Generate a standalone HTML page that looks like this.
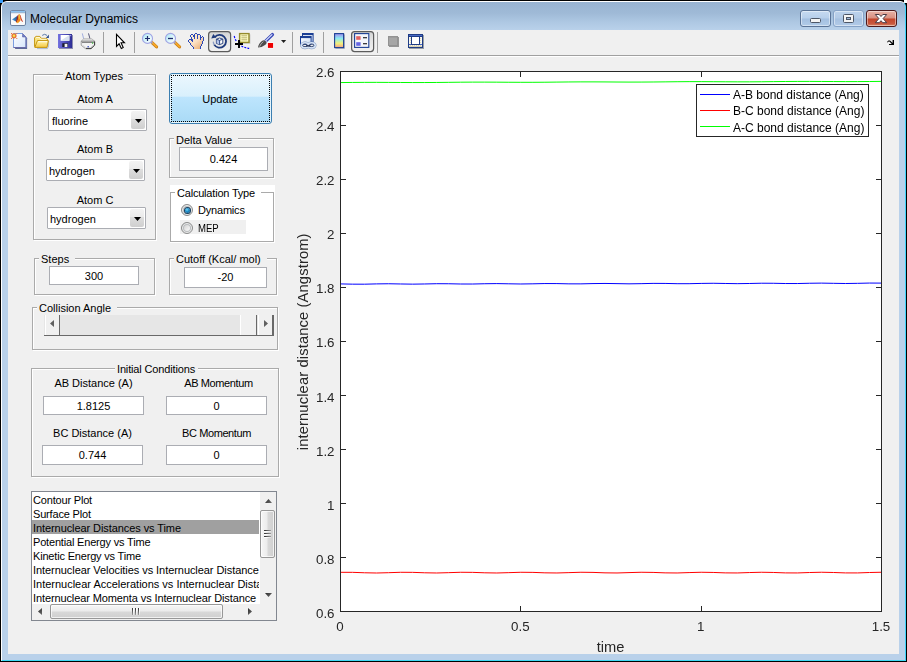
<!DOCTYPE html>
<html><head><meta charset="utf-8"><title>Molecular Dynamics</title>
<style>
*{box-sizing:border-box;margin:0;padding:0}
html,body{width:907px;height:662px;overflow:hidden;background:#000}
body{font-family:"Liberation Sans",sans-serif;font-size:11px;color:#000;position:relative}
.abs{position:absolute}
#frame{position:absolute;left:0;top:0;width:907px;height:662px;background:#000;}
#frame2{position:absolute;left:1px;top:1px;width:905px;height:660px;background:#b9d1ea;border-radius:6px 6px 0 0;border:1px solid;border-color:#fff #3ed4fb #3fd8f4 #fff}
#tgrad{position:absolute;left:2px;top:2px;width:903px;height:28px;border-radius:5px 5px 0 0;background:linear-gradient(#98b3d1 0,#9fbad7 40%,#aec8e3 72%,#b9d1ea 100%);}
#client{position:absolute;left:8px;top:30px;width:891px;height:624px;background:#f0f0f0;}
#title{position:absolute;left:30px;top:12px;font-size:12px;line-height:15px;color:#000;white-space:nowrap}
.lbl{position:absolute;white-space:nowrap;font-size:11px;line-height:13px;}
.c{text-align:center}
.panel{position:absolute;border:1px solid #aaa;box-shadow:1px 1px 0 #fff, inset 1px 1px 0 #fff;}
.ptitle{position:absolute;top:-5px;background:#f0f0f0;padding:0 2px;font-size:11px;line-height:13px;white-space:nowrap}
.edit{position:absolute;background:#fff;border:1px solid #abadb3;text-align:center;font-size:11px;}

.pop{position:absolute;height:22px;background:#fff;border:1px solid #abadb3;border-radius:1px;font-size:11px;line-height:22px;padding-left:3px;white-space:nowrap;box-shadow:inset 0 0 0 1px #fff}
.pop i{position:absolute;right:1px;top:1px;width:14px;height:18px;background:linear-gradient(#f3f3f3 0,#ebebeb 43%,#dddddd 46%,#cfcfcf 100%);border-radius:2px}
.pop i:after{content:"";position:absolute;left:4px;top:8px;width:7px;height:4px;background:#000;clip-path:polygon(0 0,100% 0,50% 100%)}
#upd{position:absolute;left:169px;top:73px;width:103px;height:51px;border:1px solid #3c7fb1;border-radius:3px;background:linear-gradient(#ecf7fe 0,#d9f0fc 45%,#bde5fd 48%,#a9daf6 100%);box-shadow:inset 0 0 0 1px #e6f5fd;text-align:center;line-height:51px;font-size:11px}
#updf{position:absolute;left:1px;top:1px;right:1px;bottom:1px;border:1px dotted #000}
#upd span{position:relative;top:0;left:-.5px}
.radio{position:absolute;width:12px;height:12px;border-radius:50%;border:1px solid #8a8b8b;background:linear-gradient(135deg,#c9c9c9 10%,#e4e4e4 45%,#fbfbfb 80%);box-shadow:inset 0 0 0 1px #f0f0f0,inset 0 0 0 2px #b9bcbe}
.radio.on:after{content:"";position:absolute;left:2.5px;top:2.5px;width:5px;height:5px;border-radius:50%;background:radial-gradient(circle at 40% 35%,#7adaf6 0,#1f8fca 40%,#0f4c7c 100%);box-shadow:0 0 0 1px #173f5f}
#slider{position:absolute;left:44px;top:315px;width:230px;height:21px;background:#e6e6e6}
#list{position:absolute;left:31px;top:491px;width:246px;height:130px;background:#fff;border:1px solid #828790;overflow:hidden}
.li{position:absolute;left:0;height:14px;line-height:16px;font-size:11px;white-space:nowrap;padding-left:1px;width:227px;overflow:hidden;letter-spacing:-.18px}
.li.sel{background:#a0a0a0}

.cb{position:absolute;top:10px;height:17px;border:1px solid;border-radius:3px;box-shadow:inset 0 0 0 1px rgba(255,255,255,.45)}
.cb svg{position:absolute;left:0;top:0}

#vs{position:absolute;left:228px;top:0;width:16px;height:112px;background:#f0f0f0}
#hs{position:absolute;left:0;top:112px;width:228px;height:16px;background:#f0f0f0}
#corner{position:absolute;left:228px;top:112px;width:16px;height:16px;background:#f0f0f0}
.vt{position:absolute;left:0;top:18px;width:15px;height:48px;border:1px solid #979797;border-radius:2px;background:linear-gradient(90deg,#f6f6f6 0,#ececec 45%,#d8d8d8 55%,#cfcfcf 100%);box-shadow:inset 0 0 0 1px rgba(255,255,255,.7)}
.ht{position:absolute;left:18px;top:0;width:173px;height:15px;border:1px solid #979797;border-radius:2px;background:linear-gradient(#f6f6f6 0,#ececec 45%,#d8d8d8 55%,#cfcfcf 100%);box-shadow:inset 0 0 0 1px rgba(255,255,255,.7)}
.vt b{position:absolute;left:3px;top:19px;width:7px;height:9px;background:repeating-linear-gradient(#3c3c3c 0,#3c3c3c 1px,#fff 1px,#fff 2px,transparent 2px,transparent 3px);-webkit-mask-image:linear-gradient(90deg,#000 20%,rgba(0,0,0,.35));mask-image:linear-gradient(90deg,#000 20%,rgba(0,0,0,.35))}
.ht b{position:absolute;left:81px;top:3px;width:9px;height:7px;background:repeating-linear-gradient(90deg,#3c3c3c 0,#3c3c3c 1px,#fff 1px,#fff 2px,transparent 2px,transparent 3px);-webkit-mask-image:linear-gradient(#000 20%,rgba(0,0,0,.35));mask-image:linear-gradient(#000 20%,rgba(0,0,0,.35))}
.va,.ha{position:absolute;background:linear-gradient(135deg,#2c2c2c,#6c6c6c)}
.va{width:7px;height:4px;left:5px}
.ha{width:4px;height:7px;top:4px}
.va.u{top:7px;clip-path:polygon(50% 0,100% 100%,0 100%)}
.va.d{top:101px;clip-path:polygon(0 0,100% 0,50% 100%)}
.ha.l{left:6px;clip-path:polygon(100% 0,100% 100%,0 50%)}
.ha.r{left:216px;clip-path:polygon(0 0,100% 50%,0 100%)}
</style></head>
<body>
<div id="frame"></div><div class="abs" style="left:0;top:0;width:3px;height:3px;background:#3a9cf8"></div><div class="abs" style="left:904px;top:0;width:3px;height:3px;background:#fff"></div>
<div id="frame2"></div>
<div id="tgrad"></div>

<svg class="abs" style="left:9px;top:9px" width="19" height="19" viewBox="9 9 19 19">
<defs><linearGradient id="gMl" x1="0" y1="0" x2="1" y2="0"><stop offset="0" stop-color="#4e9edc"/><stop offset="1" stop-color="#24548f"/></linearGradient>
<linearGradient id="gMt" x1="0" y1="0" x2="0" y2="1"><stop offset="0" stop-color="#a8d6fa"/><stop offset="1" stop-color="#5aa2e2"/></linearGradient></defs>
<rect x="10.5" y="10.5" width="15" height="15" rx="1.4" fill="#fafafa" stroke="#6c819f"/>
<rect x="11" y="10.9" width="14" height="1.7" fill="url(#gMt)"/>
<rect x="11" y="12.6" width="14" height=".6" fill="#93a2b8"/>
<path d="M12 19.4 L17.4 15.8 L17.8 17.5 L16 21.6 Z" fill="url(#gMl)"/>
<path d="M17.4 15.8 L18.6 14.4 L18.4 18.6 L17 22.8 L15.9 21.6 Z" fill="#9c2a1c"/>
<path d="M18.6 14.4 L19.3 13.9 L20 15 L20.8 18.6 L20.3 21 L18.4 22.4 L17 23.2 L16.6 22.4 L18.2 18.6 Z" fill="#ee861c"/>
<path d="M19.2 14.4 L19.8 15.4 L19.7 18.6 L19 19.4 L18.9 16.4 Z" fill="#f8d428"/>
<path d="M16.8 22.2 L18.4 21.4 L18.6 22.4 L17.2 23.3 Z" fill="#f8b424"/>
<path d="M19.8 14.6 L20.6 15.6 L21.6 18.8 L22.9 21.4 L22.4 21.9 L21.2 20.4 L20.6 18.4 Z" fill="#cc3a24"/>
</svg>
<div id="title">Molecular Dynamics</div>
<div id="client"></div>

<div class="cb" style="left:800px;width:31px;border-color:#5a7396;background:linear-gradient(#c6daf1 0,#b7cfeb 48%,#a3bfe0 52%,#b1cbe8 100%)">
<svg width="29" height="15" viewBox="0 0 29 15"><rect x="9.5" y="7.5" width="10" height="4" rx="1" fill="#f4f4f4" stroke="#4d5666"/></svg></div>
<div class="cb" style="left:833px;width:31px;border-color:#86a2c6;background:linear-gradient(#bcd2ec 0,#b2cae6 48%,#a5c0e0 52%,#b2cbe8 100%)">
<svg width="29" height="15" viewBox="-1 0 29 15"><rect x="8.5" y="3.5" width="10" height="8" rx="1" fill="#f4f4f4" stroke="#4d5666"/><rect x="11.5" y="6.5" width="4" height="2" fill="#9fb8d8" stroke="#4d5666"/></svg></div>
<div class="cb" style="left:866px;width:31px;border-color:#4d1a1c;background:linear-gradient(#e8b3a7 0,#d98f80 48%,#c2452b 52%,#c9593f 85%,#d98a6a 100%)">
<svg width="29" height="15" viewBox="0 0 29 15"><path d="M8.3 3.5 h3.9 l1.8 2 l1.8 -2 h3.9 l-3.6 4.1 l3.6 4.1 h-3.9 l-1.8 -2 l-1.8 2 h-3.9 l3.6 -4.1 z" fill="#fff" stroke="#4a3a44" stroke-width="1" stroke-linejoin="round"/></svg></div>


<div class="abs" style="left:8px;top:55px;width:891px;height:1px;background:#a0a0a0"></div>
<div class="abs" style="left:8px;top:56px;width:891px;height:1px;background:#fff"></div>
<svg id="tb" class="abs" style="left:0;top:0" width="907" height="60" viewBox="0 0 907 60">
<defs>
<linearGradient id="gPage" x1="0" y1="0" x2="1" y2="1"><stop offset="0" stop-color="#fff"/><stop offset="1" stop-color="#d6e6fb"/></linearGradient>
<linearGradient id="gFold" x1="0" y1="0" x2="0" y2="1"><stop offset="0" stop-color="#fff6b0"/><stop offset="1" stop-color="#f5c842"/></linearGradient>
<linearGradient id="gFlop" x1="0" y1="0" x2="1" y2="0"><stop offset="0" stop-color="#7472e0"/><stop offset="1" stop-color="#2c2c94"/></linearGradient>
<linearGradient id="gLens" x1="0" y1="0" x2="1" y2="1"><stop offset="0" stop-color="#a4e6f2"/><stop offset=".6" stop-color="#e4f8fc"/><stop offset="1" stop-color="#fff"/></linearGradient>
<linearGradient id="gHand" gradientUnits="userSpaceOnUse" x1="190" y1="34" x2="202" y2="49"><stop offset="0" stop-color="#fff0d0"/><stop offset=".5" stop-color="#fbe0c4"/><stop offset="1" stop-color="#e8aa6c"/></linearGradient>
<linearGradient id="gPress" x1="0" y1="0" x2="0" y2="1"><stop offset="0" stop-color="#d4d4d4"/><stop offset="0.5" stop-color="#e6e6e6"/><stop offset="1" stop-color="#f2f2f2"/></linearGradient>
<linearGradient id="gCbar" x1="0" y1="0" x2="0" y2="1"><stop offset="0" stop-color="#a08cf0"/><stop offset="0.35" stop-color="#8cecf0"/><stop offset="0.7" stop-color="#f0f07c"/><stop offset="1" stop-color="#f4a088"/></linearGradient>
<linearGradient id="gWin" x1="0" y1="0" x2="1" y2="1"><stop offset="0" stop-color="#fff"/><stop offset="1" stop-color="#c8daf2"/></linearGradient>
</defs>
<!-- separators -->
<g fill="#a0a0a0"><rect x="103" y="32" width="1" height="21"/><rect x="134" y="32" width="1" height="21"/><rect x="292" y="32" width="1" height="21"/><rect x="323" y="32" width="1" height="21"/><rect x="377" y="32" width="1" height="21"/></g>
<!-- new -->
<g>
<path d="M14.5 34.5 H23 L26.5 38 V48.5 H14.5 Z" fill="#5c6a98" transform="translate(.6,.6)"/>
<path d="M13.5 33.5 H22.5 L26 37 V47.5 H13.5 Z" fill="url(#gPage)" stroke="#7b9ee0"/>
<path d="M22.5 33.5 V37 H26 Z" fill="#6c7cc8" stroke="#6a6aa8" stroke-width=".6"/>
<path d="M26 37 V47.5 H13.5" fill="none" stroke="#6a6aa8"/>
<circle cx="14" cy="35.8" r="2.6" fill="#e8743c"/><circle cx="14" cy="35.8" r="1.2" fill="#f6e24a"/>
<g fill="#e8743c"><rect x="11" y="33" width="1" height="1"/><rect x="16.3" y="33" width="1" height="1"/><rect x="11" y="38" width="1" height="1"/><rect x="16.3" y="38" width="1" height="1"/></g>
</g>
<!-- open -->
<g>
<path d="M37 48.6 H47.4 L48.6 46 V41" fill="none" stroke="#8fa4c8" stroke-width="1" opacity=".7"/>
<path d="M42.2 35.4 Q44.6 33.2 47 35.4" fill="none" stroke="#5878a8" stroke-width="1"/>
<path d="M48.9 34.6 V37.9 H45.9 Z" fill="#2a4c8c"/>
<path d="M34.6 46.8 V37.6 L36.2 36.4 H39.8 L41.4 38.4 H46.6 L47.5 39.4 V41 H37.6" fill="#fbe57e" stroke="#c4940e" stroke-linejoin="round"/>
<path d="M35.6 38.2 L36.6 37.4 H39.4 L40.6 39.2 H46.2" fill="none" stroke="#fffbe0" stroke-width="1"/>
<path d="M34.8 47.4 L37.4 40.6 H48.4 L47 47.4 Z" fill="url(#gFold)" stroke="#c4940e" stroke-linejoin="round"/>
<path d="M38.2 41.7 H47.2" stroke="#fffef0" stroke-width="1"/>
</g>
<!-- save -->
<g>
<rect x="59" y="35" width="14" height="14" fill="#3c3c78" opacity=".55"/>
<rect x="58" y="34" width="14" height="14" fill="url(#gFlop)"/>
<rect x="60.6" y="35" width="8.8" height="5.8" fill="#fff"/><path d="M69.4 35 V40.8 H60.6 Z" fill="#d8e0f0"/>
<rect x="62.3" y="43.2" width="5.6" height="3.8" fill="#1c1c30"/><rect x="64.6" y="43.8" width="2.8" height="3.2" fill="#f4f4f4"/>
<rect x="70.2" y="35" width="1" height="1.2" fill="#b0b0f0"/>
</g>
<!-- print -->
<g>
<path d="M82.3 33.4 H88.5 L90 38.9 H83.7 Z" fill="url(#gPaper)"/>
<path d="M88.5 33.4 L90 38.9" stroke="#585878" stroke-width="1"/>
<path d="M82.3 33.4 L83.7 38.9" stroke="#8c9cd8" stroke-width=".8"/>
<path d="M81.2 41.2 L83.6 38.8 H91.8 L94.6 41.2 Z" fill="#e2e2e2" stroke="#a4a4a4" stroke-width=".7"/>
<path d="M81.2 41.2 H94.6 V45.2 L91 48.6 H85.4 L81.2 45.2 Z" fill="url(#gPrn)" stroke="#7c7c7c" stroke-width=".7"/>
<path d="M94.6 41.6 V45.2 L91 48.6 H86" fill="none" stroke="#3c3c3c" stroke-width="1"/>
<path d="M82 42.6 H93.8" stroke="#7a7a7a" stroke-width="1"/>
<path d="M82.4 43.8 H93.4" stroke="#f8f8f8" stroke-width="1"/>
<path d="M83 45.4 L86 47.4 H90.4 L93 45.4" fill="#fafafa" stroke="#c8c8c8" stroke-width=".6"/>
<rect x="87.4" y="46" width="1.6" height="1.4" fill="#5c6cc8"/>
<rect x="92" y="42.2" width="1.1" height="1.6" fill="#48b848"/>
</g>
<!-- pointer -->
<path d="M116.5 34.3 V46.4 L119.1 43.8 L121.3 48.4 L123.2 47.5 L121.1 42.8 H124.5 Z" fill="#fff" stroke="#000" stroke-width="1.1" stroke-linejoin="miter"/>
<!-- zoom in -->
<g>
<path d="M152 42.6 L156.6 46.9" stroke="#c87a10" stroke-width="3" stroke-linecap="round"/>
<path d="M152 42.4 L156.4 46.6" stroke="#f6a828" stroke-width="2" stroke-linecap="round"/>
<path d="M150.5 41.5 L152.5 43.3" stroke="#a0a0c0" stroke-width="1.6"/>
<circle cx="147.5" cy="38.4" r="5" fill="url(#gLens)" stroke="#a0a4e4" stroke-width="1.1"/>
<path d="M145 38.5 H150 M147.5 36 V41" stroke="#1c2c6c" stroke-width="1.2"/>
</g>
<!-- zoom out -->
<g>
<path d="M175 42.6 L179.6 46.9" stroke="#c87a10" stroke-width="3" stroke-linecap="round"/>
<path d="M175 42.4 L179.4 46.6" stroke="#f6a828" stroke-width="2" stroke-linecap="round"/>
<path d="M173.5 41.5 L175.5 43.3" stroke="#a0a0c0" stroke-width="1.6"/>
<circle cx="170.5" cy="38.4" r="5" fill="url(#gLens)" stroke="#a0a4e4" stroke-width="1.1"/>
<path d="M168 38.5 H173" stroke="#1c2c6c" stroke-width="1.3"/>
</g>
<!-- hand -->
<g shape-rendering="crispEdges"><path d="M195 34h2v1h-2zM191 35h2v1h-2zM195 35h2v1h-2zM198 35h2v1h-2zM191 36h2v1h-2zM195 36h2v1h-2zM198 36h2v1h-2zM192 37h2v1h-2zM195 37h2v1h-2zM198 37h2v1h-2zM202 37h1v1h-1zM192 38h2v1h-2zM195 38h2v1h-2zM198 38h2v1h-2zM201 38h2v1h-2zM193 39h7v1h-7zM201 39h2v1h-2zM189 40h2v1h-2zM193 40h10v1h-10zM189 41h3v1h-3zM193 41h9v1h-9zM190 42h12v1h-12zM191 43h11v1h-11zM191 44h10v1h-10zM192 45h9v1h-9zM193 46h7v1h-7zM194 47h6v1h-6zM194 48h6v1h-6z" fill="url(#gHand)"/><path d="M195 33h2v1h-2zM191 34h2v1h-2zM194 34h1v1h-1zM197 34h3v1h-3zM190 35h1v1h-1zM193 35h2v1h-2zM197 35h1v1h-1zM200 35h1v1h-1zM190 36h1v1h-1zM193 36h2v1h-2zM197 36h1v1h-1zM200 36h1v1h-1zM202 36h1v1h-1zM191 37h1v1h-1zM194 37h1v1h-1zM197 37h1v1h-1zM200 37h2v1h-2zM203 37h1v1h-1zM191 38h1v1h-1zM194 38h1v1h-1zM197 38h1v1h-1zM200 38h1v1h-1zM203 38h1v1h-1zM189 39h4v1h-4zM200 39h1v1h-1zM203 39h1v1h-1zM188 40h1v1h-1zM191 40h2v1h-2zM203 40h1v1h-1zM188 41h1v1h-1zM192 41h1v1h-1zM202 41h1v1h-1zM189 42h1v1h-1zM202 42h1v1h-1zM190 43h1v1h-1zM202 43h1v1h-1zM190 44h1v1h-1zM201 44h1v1h-1zM191 45h1v1h-1zM201 45h1v1h-1zM192 46h1v1h-1zM200 46h1v1h-1zM193 47h1v1h-1zM200 47h1v1h-1zM193 48h1v1h-1zM200 48h1v1h-1z" fill="#2a48b8"/></g>
<!-- rotate pressed -->
<rect x="208.6" y="31.6" width="22" height="20" rx="3" fill="url(#gPress)" stroke="#5c5c5c" stroke-width="1.2"/>
<g>
<path d="M214.7 37.2 A6.4 6.4 0 1 1 214.2 44.6" fill="none" stroke="#1f3a7c" stroke-width="1.8"/>
<path d="M214.2 44.6 A6.4 6.4 0 0 1 213.3 41.6" fill="none" stroke="#8c9cc4" stroke-width="1.3"/>
<path d="M211.2 38.4 L213.3 33.9 L216.3 37.6 Z" fill="#1f3a7c"/>
<path d="M216.4 39.2 L219.6 38 L222.8 39.2 V43.4 L219.6 44.6 L216.4 43.4 Z" fill="#fff" stroke="#1f3a7c" stroke-width=".9" stroke-linejoin="round"/>
<path d="M216.8 39.8 L219.4 40.8 V44 L216.8 43 Z" fill="#b4c4ec"/>
<path d="M216.4 39.2 L219.6 40.4 L222.8 39.2 M219.6 40.4 V44.6" fill="none" stroke="#1f3a7c" stroke-width=".9"/>
</g>
<!-- data cursor -->
<g>
<rect x="240.4" y="34.4" width="10" height="9.4" fill="#b0b0b0" opacity=".6"/>
<rect x="239.6" y="33.6" width="9.4" height="8.8" fill="#ffffc4" stroke="#948a2c" stroke-width="1.4"/>
<path d="M241.4 35.8 H247.2 M241.4 37.8 H247.2 M241.4 39.8 H247.2" stroke="#b8b070" stroke-width="1"/>
<path d="M234.2 36 Q235 39.4 236.8 41.6" fill="none" stroke="#0000ff" stroke-width="1.1" stroke-dasharray="2 1.2"/>
<path d="M241.4 46 Q245 48 249.2 48.4" fill="none" stroke="#0000ff" stroke-width="1.1" stroke-dasharray="2 1.2"/>
<path d="M235 44 H243 M239 40 V48" stroke="#000" stroke-width="1.9"/>
</g>
<!-- brush -->
<g>
<path d="M265.4 41.4 L272.4 34.6" stroke="#3848b8" stroke-width="3.4" stroke-linecap="round"/>
<path d="M265.8 40.6 L272 34.6" stroke="#dfe6ff" stroke-width="1.1" stroke-linecap="round"/>
<path d="M264.4 40.2 L266.8 42.6" stroke="#c8d0f0" stroke-width="1.6"/>
<path d="M258 47.6 Q258.6 43.4 262.2 40.8 Q264.2 39.6 265.2 40.8 L266.4 42 Q267 43.4 265.4 44.8 Q262 47.6 258 47.6 Z" fill="#4c4c4c"/>
<path d="M259.6 46.6 Q260.6 43.6 263.4 41.6" fill="none" stroke="#b0b0b0" stroke-width="1"/>
<rect x="267.3" y="42.4" width="6.4" height="6" fill="#fff"/><rect x="267.9" y="43" width="5.2" height="4.9" fill="#ee0000"/>
<path d="M281 40 H286.2 L283.6 43 Z" fill="#202020"/>
</g>
<!-- link -->
<g>
<rect x="302.5" y="33.5" width="10.6" height="8.6" fill="url(#gWin)" stroke="#1c3f94"/><rect x="302.5" y="33.3" width="10.6" height="1.8" fill="#1c3f94"/>
<rect x="300.5" y="36.5" width="10.6" height="8" fill="url(#gWin)" stroke="#1c3f94"/><rect x="300.5" y="36.3" width="10.6" height="1.8" fill="#1c3f94"/>
<g fill="none">
<ellipse cx="305" cy="45.3" rx="3.5" ry="2.5" stroke="#7890b8" stroke-width="2.8"/>
<ellipse cx="311.6" cy="45.3" rx="3.5" ry="2.5" stroke="#7890b8" stroke-width="2.8"/>
<ellipse cx="305" cy="45.3" rx="3.5" ry="2.5" stroke="#d4e2f6" stroke-width="1.8"/>
<ellipse cx="311.6" cy="45.3" rx="3.5" ry="2.5" stroke="#d4e2f6" stroke-width="1.8"/>
<ellipse cx="305" cy="45.3" rx="2.3" ry="1.3" stroke="#2c3c64" stroke-width=".8"/>
<ellipse cx="311.6" cy="45.3" rx="2.3" ry="1.3" stroke="#2c3c64" stroke-width=".8"/>
<path d="M306.2 45.9 H310.4" stroke="#16244a" stroke-width="1.4"/>
</g>
</g>
<!-- colorbar -->
<g>
<rect x="335.4" y="34.4" width="9.4" height="14.4" fill="#506080" opacity=".5"/>
<rect x="334.6" y="33.6" width="9" height="14" fill="url(#gCbar)" stroke="#1c3f94" stroke-width="1.1"/>
</g>
<!-- legend pressed -->
<rect x="351.6" y="31.6" width="22" height="20" rx="3" fill="url(#gPress)" stroke="#5c5c5c" stroke-width="1.2"/>
<g>
<rect x="354.6" y="33.6" width="14.2" height="13.8" fill="#f4f6fc" stroke="#1c3f94" stroke-width="1.1"/>
<rect x="356.2" y="36.2" width="4.4" height="3.6" fill="#e26060"/><rect x="356.2" y="42.2" width="4.4" height="3.6" fill="#6464e4"/>
<path d="M363 37.8 H367 M363 43.8 H367" stroke="#000" stroke-width="1.1"/>
</g>
<!-- gray square -->
<g shape-rendering="crispEdges"><rect x="389" y="37" width="10" height="10" fill="#959595"/><rect x="388" y="36" width="10" height="10" fill="#929292"/><rect x="389" y="38" width="8" height="7" fill="#a6a6a6"/><rect x="389" y="37" width="8" height="1" fill="#9c9c9c"/></g>
<!-- dock -->
<g shape-rendering="crispEdges">
<rect x="409" y="35" width="15" height="14" fill="#7c848c" opacity=".75"/>
<rect x="408" y="34" width="15" height="14" fill="#1f3c84"/>
<rect x="409" y="35" width="13" height="1" fill="#4868c4"/>
<rect x="409" y="37" width="2" height="7" fill="#f6f6ee"/><rect x="420" y="37" width="2" height="7" fill="#f6f6ee"/>
<rect x="412" y="37" width="7" height="7" fill="#fff"/>
<rect x="409" y="44" width="2" height="1" fill="#4868c4"/><rect x="420" y="44" width="2" height="1" fill="#4868c4"/>
<rect x="409" y="45" width="13" height="2" fill="#d8d2b6"/>
<path d="M409 45h1v1h-1zM411 45h1v1h-1zM413 45h1v1h-1zM415 45h1v1h-1zM417 45h1v1h-1zM419 45h1v1h-1zM421 45h1v1h-1z" fill="#f4f2e4"/>
<path d="M410 38h1v1h-1zM410 40h1v1h-1zM410 42h1v1h-1zM420 38h1v1h-1zM420 40h1v1h-1zM420 42h1v1h-1z" fill="#dcd8c0"/>
</g>
<!-- corner arrow -->
<path d="M887 42 L888.4 40.4 H890 L892.6 43 V40 H894 V45 H889 V44 H891.8 L889.4 41.6 H888.6 L887.8 42.6 Z" fill="#000"/>
</svg>


<div id="left">
<!-- Atom Types -->
<div class="panel" style="left:33px;top:74px;width:123px;height:166px"><div class="ptitle" style="left:29px;padding-right:5px">Atom Types</div></div>
<div class="lbl c" style="left:45px;top:93px;width:100px">Atom A</div>
<div class="pop" style="left:48px;top:109px;width:99px">fluorine<i></i></div>
<div class="lbl c" style="left:45px;top:143px;width:100px">Atom B</div>
<div class="pop" style="left:46px;top:159px;width:99px;padding-left:2px">hydrogen<i></i></div>
<div class="lbl c" style="left:45px;top:194px;width:100px">Atom C</div>
<div class="pop" style="left:47px;top:207px;width:99px;padding-left:2px">hydrogen<i></i></div>
<!-- Update -->
<div id="upd"><div id="updf"></div><span>Update</span></div>
<!-- Delta -->
<div class="panel" style="left:169px;top:138px;width:105px;height:40px"><div class="ptitle" style="left:4px;padding-right:6px">Delta Value</div></div>
<div class="edit" style="left:179px;top:147px;width:89px;height:24px;line-height:22px">0.424</div>
<!-- Calc type -->
<div class="abs" style="left:170px;top:185px;width:105px;height:58px;background:#fff"></div>
<div class="panel" style="left:170px;top:192px;width:104px;height:50px"><div class="ptitle" style="left:4px;top:-6px;padding-right:6px;background:#fff;letter-spacing:-.2px">Calculation Type</div></div>
<div class="radio on" style="left:181px;top:204px"></div>
<div class="lbl" style="left:198px;top:204px;letter-spacing:-.2px">Dynamics</div>
<div class="abs" style="left:180px;top:220px;width:66px;height:14px;background:#f0f0f0"></div>
<div class="radio" style="left:181px;top:222px"></div>
<div class="lbl" style="left:198px;top:222px;transform:scaleX(.87);transform-origin:0 0">MEP</div>
<!-- Steps -->
<div class="panel" style="left:34px;top:258px;width:121px;height:37px"><div class="ptitle" style="left:4px;top:-6px;padding-right:6px">Steps</div></div>
<div class="edit" style="left:49px;top:266px;width:90px;height:19px;line-height:19px">300</div>
<!-- Cutoff -->
<div class="panel" style="left:169px;top:258px;width:108px;height:37px"><div class="ptitle" style="left:4px;top:-6px;padding-right:6px">Cutoff (Kcal/ mol)</div></div>
<div class="edit" style="left:184px;top:267px;width:83px;height:21px;line-height:19px">-20</div>
<!-- Collision angle -->
<div class="panel" style="left:32px;top:307px;width:246px;height:43px"><div class="ptitle" style="left:4px;top:-6px;padding-right:6px">Collision Angle</div></div>
<div id="slider">
<div class="abs" style="left:0;top:20px;width:230px;height:1px;background:#696969"></div>
<div class="abs" style="left:1px;top:0;width:14px;height:20px;background:#f0f0f0;border-left:1px solid #fff;border-right:1px solid #696969;box-sizing:content-box;width:13px"></div>
<div class="abs" style="left:196px;top:0;height:20px;background:#f0f0f0;border-left:1.5px solid #fff;border-right:1.5px solid #696969;box-sizing:content-box;width:15px"></div>
<div class="abs" style="left:214px;top:0;height:20px;background:#f0f0f0;border-left:1px solid #fff;border-right:2px solid #696969;box-sizing:content-box;width:13px"></div>
<svg class="abs" style="left:0;top:0" width="230" height="21" viewBox="0 0 230 21"><path d="M6 8.5 L10 5 V12 Z M224 8.5 L220 5 V12 Z" fill="#606060"/></svg>
</div>
<!-- Initial conditions -->
<div class="panel" style="left:31px;top:368px;width:248px;height:109px"><div class="ptitle" style="left:83px;top:-6px;padding-right:3px;letter-spacing:-.15px">Initial Conditions</div></div>
<div class="lbl c" style="left:43px;top:377px;width:101px">AB Distance (A)</div>
<div class="lbl c" style="left:166px;top:377px;width:105px;letter-spacing:-.4px">AB Momentum</div>
<div class="edit" style="left:43px;top:396px;width:101px;height:19px;line-height:19px">1.8125</div>
<div class="edit" style="left:166px;top:396px;width:101px;height:19px;line-height:19px">0</div>
<div class="lbl c" style="left:42px;top:427px;width:101px">BC Distance (A)</div>
<div class="lbl c" style="left:166px;top:427px;width:101px;letter-spacing:-.4px">BC Momentum</div>
<div class="edit" style="left:42px;top:445px;width:101px;height:20px;line-height:18px">0.744</div>
<div class="edit" style="left:166px;top:445px;width:101px;height:20px;line-height:18px">0</div>
<!-- Listbox -->
<div id="list">
<div style="top:0px" class="li">Contour Plot</div>
<div style="top:14px" class="li">Surface Plot</div>
<div style="top:28px;letter-spacing:-.08px" class="li sel">Internuclear Distances vs Time</div>
<div style="top:42px" class="li">Potential Energy vs Time</div>
<div style="top:56px" class="li">Kinetic Energy vs Time</div>
<div style="top:70px;letter-spacing:-.06px" class="li">Internuclear Velocities vs Internuclear Distance</div>
<div style="top:84px;letter-spacing:-.01px" class="li">Internuclear Accelerations vs Internuclear Distance</div>
<div style="top:98px;letter-spacing:-.11px" class="li">Internuclear Momenta vs Internuclear Distance</div>
<div id="vs"><div class="va u"></div><div class="vt"><b></b></div><div class="va d"></div></div>
<div id="hs"><div class="ha l"></div><div class="ht"><b></b></div><div class="ha r"></div></div>
<div id="corner"></div>
</div>
</div>

<svg id="plot" class="abs" style="left:0;top:0;will-change:transform" width="907" height="662" viewBox="0 0 907 662" font-family="Liberation Sans, sans-serif">
<rect x="340.5" y="71.5" width="541" height="540" fill="#fff"/>
<polyline fill="none" stroke="#00ff00" stroke-width="1" points="340.5,82.57 352.5,82.44 364.5,82.36 376.6,82.35 388.6,82.41 400.6,82.49 412.6,82.55 424.7,82.54 436.7,82.46 448.7,82.33 460.7,82.20 472.7,82.12 484.8,82.11 496.8,82.17 508.8,82.26 520.8,82.31 532.9,82.31 544.9,82.23 556.9,82.09 568.9,81.96 580.9,81.88 593.0,81.88 605.0,81.93 617.0,82.02 629.0,82.08 641.1,82.07 653.1,81.99 665.1,81.86 677.1,81.73 689.1,81.64 701.2,81.64 713.2,81.70 725.2,81.78 737.2,81.84 749.3,81.83 761.3,81.75 773.3,81.62 785.3,81.49 797.3,81.41 809.4,81.40 821.4,81.46 833.4,81.54 845.4,81.60 857.5,81.59 869.5,81.51 881.5,81.38"/>
<polyline fill="none" stroke="#0000ff" stroke-width="1" points="340.5,283.91 352.5,284.17 364.5,284.19 376.6,283.90 388.6,283.76 400.6,283.97 412.6,284.15 424.7,283.98 436.7,283.71 448.7,283.75 460.7,284.01 472.7,284.03 484.8,283.74 496.8,283.60 508.8,283.80 520.8,283.99 532.9,283.82 544.9,283.55 556.9,283.59 568.9,283.85 580.9,283.86 593.0,283.58 605.0,283.44 617.0,283.64 629.0,283.83 641.1,283.66 653.1,283.38 665.1,283.43 677.1,283.69 689.1,283.70 701.2,283.42 713.2,283.28 725.2,283.48 737.2,283.66 749.3,283.49 761.3,283.22 773.3,283.27 785.3,283.53 797.3,283.54 809.4,283.26 821.4,283.11 833.4,283.32 845.4,283.50 857.5,283.33 869.5,283.06 881.5,283.10"/>
<polyline fill="none" stroke="#ff0000" stroke-width="1" points="340.5,572.30 352.5,572.33 364.5,572.77 376.6,573.00 388.6,572.70 400.6,572.29 412.6,572.35 424.7,572.79 436.7,572.99 448.7,572.67 460.7,572.28 472.7,572.36 484.8,572.81 496.8,572.99 508.8,572.65 520.8,572.27 532.9,572.38 544.9,572.83 556.9,572.98 568.9,572.63 580.9,572.26 593.0,572.40 605.0,572.85 617.0,572.98 629.0,572.60 641.1,572.25 653.1,572.42 665.1,572.87 677.1,572.97 689.1,572.58 701.2,572.25 713.2,572.44 725.2,572.89 737.2,572.96 749.3,572.55 761.3,572.25 773.3,572.46 785.3,572.90 797.3,572.94 809.4,572.53 821.4,572.24 833.4,572.49 845.4,572.92 857.5,572.93 869.5,572.51 881.5,572.24"/>
<g stroke="#262626" stroke-width="1" fill="none" shape-rendering="crispEdges">
<rect x="340.5" y="71.5" width="541" height="540"/>
<path d="M340.5 125.5 h5.5 M881.5 125.5 h-5.5"/>
<path d="M340.5 179.5 h5.5 M881.5 179.5 h-5.5"/>
<path d="M340.5 233.5 h5.5 M881.5 233.5 h-5.5"/>
<path d="M340.5 287.5 h5.5 M881.5 287.5 h-5.5"/>
<path d="M340.5 341.5 h5.5 M881.5 341.5 h-5.5"/>
<path d="M340.5 395.5 h5.5 M881.5 395.5 h-5.5"/>
<path d="M340.5 449.5 h5.5 M881.5 449.5 h-5.5"/>
<path d="M340.5 503.5 h5.5 M881.5 503.5 h-5.5"/>
<path d="M340.5 557.5 h5.5 M881.5 557.5 h-5.5"/>
<path d="M520.5 611.5 v-5.5 M520.5 71.5 v5.5"/>
<path d="M701.5 611.5 v-5.5 M701.5 71.5 v5.5"/>
</g>
<g fill="#262626" font-size="13.33px">
<text x="334.5" y="76.8" text-anchor="end">2.6</text>
<text x="334.5" y="130.8" text-anchor="end">2.4</text>
<text x="334.5" y="184.8" text-anchor="end">2.2</text>
<text x="334.5" y="238.8" text-anchor="end">2</text>
<text x="334.5" y="292.8" text-anchor="end">1.8</text>
<text x="334.5" y="346.8" text-anchor="end">1.6</text>
<text x="334.5" y="401.6" text-anchor="end">1.4</text>
<text x="334.5" y="455.6" text-anchor="end">1.2</text>
<text x="334.5" y="509.6" text-anchor="end">1</text>
<text x="334.5" y="563.6" text-anchor="end">0.8</text>
<text x="334.5" y="617.6" text-anchor="end">0.6</text>
<text x="340" y="631" text-anchor="middle">0</text>
<text x="520.333" y="631" text-anchor="middle">0.5</text>
<text x="700.667" y="631" text-anchor="middle">1</text>
<text x="881" y="631" text-anchor="middle">1.5</text>
</g>
<g fill="#262626" font-size="14.67px">
<text x="610.5" y="652" text-anchor="middle">time</text>
<text transform="translate(308,341.8) rotate(-90)" text-anchor="middle" id="ylab" letter-spacing=".16">internuclear distance (Angstrom)</text>
</g>
<rect x="696.5" y="84.5" width="172" height="52" fill="#fff" stroke="#262626" shape-rendering="crispEdges"/>
<path d="M700 94.5 H730" stroke="#0000ff" stroke-width="1" shape-rendering="crispEdges"/>
<text x="733" y="98.7" font-size="12px" fill="#000">A-B bond distance (Ang)</text>
<path d="M700 110.5 H730" stroke="#ff0000" stroke-width="1" shape-rendering="crispEdges"/>
<text x="733" y="114.7" font-size="12px" fill="#000">B-C bond distance (Ang)</text>
<path d="M700 126.5 H730" stroke="#00ff00" stroke-width="1" shape-rendering="crispEdges"/>
<text x="733" y="131.5" font-size="12px" fill="#000">A-C bond distance (Ang)</text>
</svg>
</body></html>
